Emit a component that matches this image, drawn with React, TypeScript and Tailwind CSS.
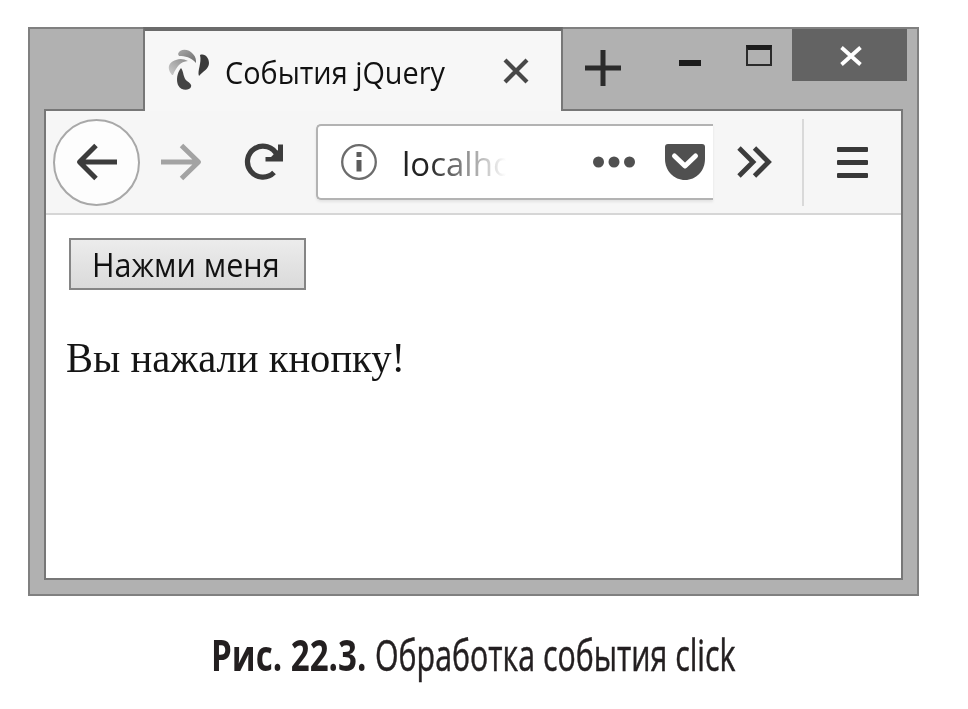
import type { ReactNode } from 'react';

function TabIcon() {
  return (
    <svg width="44" height="46" viewBox="0 0 44 46" className="shrink-0">
      <defs>
        <linearGradient id="petalTop" x1="0" y1="0" x2="1" y2="1">
          <stop offset="0" stopColor="#a8a8a8" />
          <stop offset="1" stopColor="#6c6c6c" />
        </linearGradient>
        <linearGradient id="petalLeft" x1="0" y1="1" x2="1" y2="0">
          <stop offset="0" stopColor="#cdcdcd" />
          <stop offset="1" stopColor="#8c8c8c" />
        </linearGradient>
      </defs>
      <path d="M10 7C12 1 21 2 25 7C28 10 28 13 28 16C23 10 17 9 11 9Z" fill="url(#petalTop)" />
      <path d="M4 28C-2 21 1 15 8 13C12 11 16 12 20 14C12 15 9 19 5 28Z" fill="url(#petalLeft)" />
      <path d="M13 21C16 25 15 31 19 34C22 36 24 38 23 40C21 44 13 44 10 38C8 33 9 26 13 21Z" fill="#444" />
      <path d="M32 8C37 6 41 11 41 16C41 22 35 24 31 29C29 24 34 16 32 8Z" fill="#3a3a3a" />
    </svg>
  );
}

function TitleBar() {
  return (
    <div className="flex h-[80px] shrink-0 items-start">
      <div className="relative z-10 -mt-[2px] ml-[113px] flex h-[84px] w-[420px] shrink-0 border-x-2 border-t-4 border-[#777] border-t-[#6b6b6b] bg-[#f7f7f7] pt-[16px]">
        <div className="ml-[23px] flex">
          <TabIcon />
        </div>
        <div className="ml-[13px] mt-[5px] h-[40px] w-[222px]">
          <span className="inline-block origin-left scale-x-[0.93] whitespace-nowrap font-['Open_Sans',sans-serif] text-[31px] leading-[40px] text-[#111]">
            События jQuery
          </span>
        </div>
        <svg width="26" height="26" viewBox="0 0 26 26" className="ml-[56px] mt-[11px] shrink-0">
          <path d="M2 2L24 24M24 2L2 24" stroke="#484848" strokeWidth="4.2" />
        </svg>
      </div>
      <svg width="36" height="36" viewBox="0 0 36 36" className="ml-[22px] mt-[21px] shrink-0">
        <path d="M18 0V36M0 18H36" stroke="#2b2b2b" strokeWidth="5" />
      </svg>
      <div className="ml-[58px] mt-[31px] h-[6px] w-[22px] shrink-0 bg-[#1c1c1c]" />
      <div className="ml-[45px] mt-[16px] h-[21px] w-[26px] shrink-0 border-2 border-t-[5px] border-[#2b2b2b] border-t-[#1c1c1c]" />
      <div className="ml-[20px] flex h-[52px] w-[115px] shrink-0 items-center justify-center bg-[#636363]">
        <svg width="22" height="20" viewBox="0 0 22 20" className="ml-[2px] mt-[2px]">
          <path d="M1.500 1.500L20.500 18.500M20.500 1.500L1.500 18.500" stroke="#fff" strokeWidth="3.800" />
        </svg>
      </div>
    </div>
  );
}

function ToolbarIcon({ children }: { children: ReactNode }) {
  return (
    <svg width="44" height="44" viewBox="0 0 44 44" fill="none" className="shrink-0">
      {children}
    </svg>
  );
}

function Toolbar() {
  return (
    <div className="flex h-[104px] shrink-0 items-center border-b-2 border-[#d6d6d6] bg-[#f6f6f6] pl-[7px]">
      <div className="flex size-[87px] shrink-0 items-center justify-center rounded-full border-2 border-[#a8a8a8] bg-[#fdfdfd]">
        <ToolbarIcon>
          <path d="M42 22H5M21 5.500L4.500 22L21 38.500" stroke="#3c3c3c" strokeWidth="5" strokeLinejoin="round" />
        </ToolbarIcon>
      </div>
      <div className="ml-[19px] flex">
        <ToolbarIcon>
          <path d="M2 22H39M22.500 5.500L39.500 22L22.500 38.500" stroke="#a3a3a3" strokeWidth="5" strokeLinejoin="round" />
        </ToolbarIcon>
      </div>
      <div className="ml-[39px] flex">
        <ToolbarIcon>
          <path d="M35 15A15.500 15.500 0 1 0 32 32.500" stroke="#3c3c3c" strokeWidth="5.200" />
          <path d="M41 4.500V21.500H23.500V17H29L36 10V4.500Z" fill="#3c3c3c" />
        </ToolbarIcon>
      </div>
      <div className="ml-[30px] flex h-[76px] w-[397px] shrink-0 items-center rounded-l-[5px] border-2 border-r-0 border-[#b3b3b3] bg-white shadow-[0_2px_3px_rgba(0,0,0,0.08)]">
        <svg width="38" height="38" viewBox="0 0 38 38" fill="none" className="ml-[22px] shrink-0">
          <circle cx="19" cy="19" r="16.800" stroke="#6c6c6c" strokeWidth="2.300" />
          <path d="M19 17V28.500M19 9V14" stroke="#5c5c5c" strokeWidth="5" />
        </svg>
        <div className="ml-[24px] mt-[4px] h-[46px] w-[130px] shrink-0 bg-gradient-to-r from-[#222] from-20% to-transparent to-80% bg-clip-text font-['Open_Sans',sans-serif] text-[33px] leading-[46px] text-transparent">
          localho
        </div>
        <svg width="42" height="12" viewBox="0 0 42 12" fill="#505050" className="ml-[61px] shrink-0">
          <circle cx="5.500" cy="6" r="5.500" />
          <circle cx="21" cy="6" r="5.500" />
          <circle cx="36.500" cy="6" r="5.500" />
        </svg>
        <svg width="42" height="38" viewBox="0 0 42 38" fill="none" className="ml-[29px] shrink-0">
          <path d="M4 1H38Q41 1 41 4V16C41 28 32 37 21 37S1 28 1 16V4Q1 1 4 1Z" fill="#505050" />
          <path d="M10.500 13L21 23L31.500 13" stroke="#fff" strokeWidth="5" strokeLinecap="round" strokeLinejoin="round" />
        </svg>
      </div>
      <svg width="36" height="34" viewBox="0 0 36 34" fill="none" className="ml-[24px] shrink-0">
        <path d="M2 3L16 17L2 31M17.500 3L31.500 17L17.500 31" stroke="#3c3c3c" strokeWidth="4.800" />
      </svg>
      <div className="ml-[29px] h-[87px] w-[2px] shrink-0 bg-[#d9d9d9]" />
      <div className="ml-[33px] flex w-[31px] shrink-0 flex-col gap-[8px]">
        <div className="h-[5px] rounded-[1px] bg-[#383838]" />
        <div className="h-[5px] rounded-[1px] bg-[#383838]" />
        <div className="h-[5px] rounded-[1px] bg-[#383838]" />
      </div>
    </div>
  );
}

function Page() {
  return (
    <div className="flex flex-1 flex-col items-start bg-white pl-[23px] pt-[23px]">
      <button className="flex h-[52px] w-[237px] items-center border-2 border-[#858585] bg-gradient-to-b from-[#ececec] to-[#dadada] pl-[21px]">
        <span className="inline-block origin-left scale-x-[0.955] whitespace-nowrap pt-[2px] font-['Open_Sans',sans-serif] text-[32px] leading-[44px] text-[#111]">
          Нажми меня
        </span>
      </button>
      <p className="-ml-[3px] mt-[43px] origin-left scale-x-[0.966] whitespace-nowrap font-['Liberation_Serif',serif] text-[42px] leading-[50px] text-[#151515]">
        Вы нажали кнопку!
      </p>
    </div>
  );
}

export default function App() {
  return (
    <div className="flex h-[709px] w-[968px] flex-col overflow-hidden bg-white pl-[28px] pt-[27px]">
      <div className="flex h-[569px] w-[891px] shrink-0 flex-col border-2 border-[#808080] bg-[#b1b1b1]">
        <TitleBar />
        <div className="mx-[14px] mb-[14px] flex flex-1 flex-col border-2 border-[#777]">
          <Toolbar />
          <Page />
        </div>
      </div>
      <div className="mt-[29px] flex h-[60px] pl-[183px] font-['Open_Sans',sans-serif] text-[43px] leading-[60px] text-[#231f20]">
        <div className="w-[164px]">
          <span className="inline-block origin-left scale-x-[0.77] whitespace-nowrap font-bold">Рис. 22.3.</span>
        </div>
        <div className="w-[365px]">
          <span className="inline-block origin-left scale-x-[0.705] whitespace-nowrap [-webkit-text-stroke:0.5px_#231f20]">Обработка события click</span>
        </div>
      </div>
    </div>
  );
}
